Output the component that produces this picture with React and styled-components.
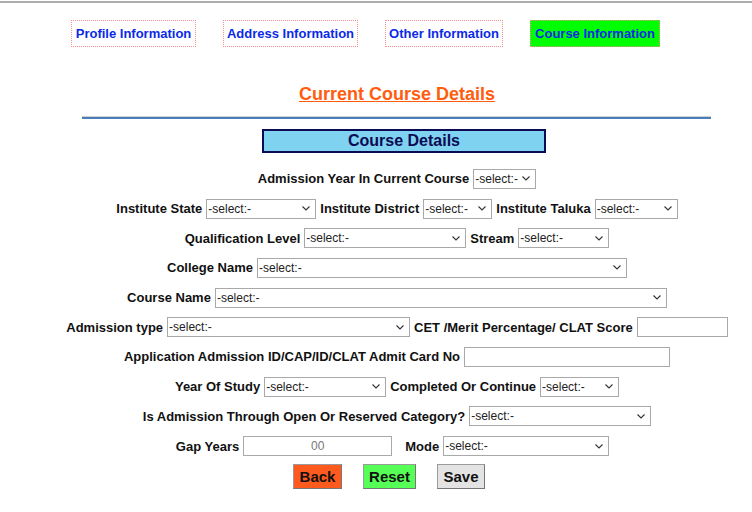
import React from "react";
import styled, { createGlobalStyle } from "styled-components";

const GlobalStyle = createGlobalStyle`
  body {
    margin: 0;
    background: #ffffff;
    font-family: "Liberation Sans", Arial, sans-serif;
  }
`;

// small chevron drawn for the dropdowns
const chevron =
  "data:image/svg+xml;utf8," +
  encodeURIComponent(
    '<svg xmlns="http://www.w3.org/2000/svg" width="8" height="5" viewBox="0 0 8 5"><path d="M0.5 0.5 L4 4 L7.5 0.5" fill="none" stroke="#333" stroke-width="1.1"/></svg>'
  );

const Page = styled.div`
  width: 752px;
  height: 512px;
  box-sizing: border-box;
  margin-top: 1px;
  border-top: 2px solid #adadad;
`;

const Tabs = styled.div`
  display: flex;
  gap: 27px;
  padding: 17px 0 0 71px;
`;

const Tab = styled.div`
  box-sizing: border-box;
  height: 27px;
  width: ${(p) => p.w}px;
  display: flex;
  align-items: center;
  justify-content: center;
  border: 1px dotted #f39090;
  background: ${(p) => (p.active ? "#00ff00" : "#ffffff")};
  color: #0a2ae8;
  font-size: 13px;
  font-weight: bold;
`;

const Body = styled.div`
  padding-left: 42px;
`;

const Title = styled.h2`
  margin: 36px 0 0;
  text-align: center;
  font-size: 18px;
  line-height: 22px;
  font-weight: bold;
  color: #ff5c0e;
  text-decoration: underline;
`;

const Rule = styled.div`
  margin: 11px 41px 0 40px;
  height: 2px;
  background: #4a7ebb;
  border-top: 1px solid #cfcfcf;
`;

const SectionHead = styled.div`
  box-sizing: border-box;
  width: 284px;
  height: 24px;
  margin: 10px 0 0 220px;
  display: flex;
  align-items: center;
  justify-content: center;
  background: #7fd3f0;
  border: 2px solid #0b0b55;
  color: #0b0b55;
  font-size: 16px;
  font-weight: bold;
`;

const Form = styled.div`
  display: flex;
  flex-direction: column;
  margin-top: 11px;
`;

const Row = styled.div`
  height: 29.7px;
  display: flex;
  align-items: center;
  justify-content: center;
  gap: 4px;
  margin-left: ${(p) => p.shift || 0}px;
`;

const Label = styled.span`
  font-size: 13px;
  font-weight: bold;
  color: #111111;
  white-space: nowrap;
  margin-left: ${(p) => p.gap || 0}px;
`;

const Select = styled.select`
  box-sizing: border-box;
  width: ${(p) => p.w}px;
  height: 20px;
  padding: 0 14px 0 1px;
  border: 1px solid #a9a9a9;
  border-radius: 0;
  appearance: none;
  background: #ffffff url("${chevron}") no-repeat right 5px center;
  color: #222222;
  font-family: "Liberation Sans", Arial, sans-serif;
  font-size: 12px;
`;

const TextInput = styled.input`
  box-sizing: border-box;
  width: ${(p) => p.w}px;
  height: 20px;
  padding: 0 2px;
  border: 1px solid #a9a9a9;
  border-radius: 0;
  color: #777777;
  text-align: ${(p) => (p.center ? "center" : "left")};
  font-family: "Liberation Sans", Arial, sans-serif;
  font-size: 12px;
`;

const Buttons = styled.div`
  display: flex;
  justify-content: center;
  gap: 21px;
  margin-top: 3px;
  transform: translateX(-8px);
`;

const Button = styled.button`
  box-sizing: border-box;
  height: 25px;
  width: ${(p) => p.w}px;
  padding: 0;
  border: 1px solid #9a9a9a;
  border-right-color: #777777;
  border-bottom-color: #777777;
  background: ${(p) => p.bg};
  color: #111111;
  font-family: "Liberation Sans", Arial, sans-serif;
  font-size: 15px;
  font-weight: bold;
`;

const Sel = ({ w }) => (
  <Select w={w} defaultValue="">
    <option value="">-select:-</option>
  </Select>
);

export default function App() {
  return (
    <>
      <GlobalStyle />
      <Page>
        <Tabs>
          <Tab w={125}>Profile Information</Tab>
          <Tab w={135}>Address Information</Tab>
          <Tab w={118}>Other Information</Tab>
          <Tab w={130} active>
            Course Information
          </Tab>
        </Tabs>
        <Body>
          <Title>Current Course Details</Title>
          <Rule />
          <SectionHead>Course Details</SectionHead>
          <Form>
            <Row>
              <Label>Admission Year In Current Course</Label>
              <Sel w={63} />
            </Row>
            <Row>
              <Label>Institute State</Label>
              <Sel w={110} />
              <Label>Institute District</Label>
              <Sel w={69} />
              <Label>Institute Taluka</Label>
              <Sel w={83} />
            </Row>
            <Row>
              <Label>Qualification Level</Label>
              <Sel w={162} />
              <Label>Stream</Label>
              <Sel w={91} />
            </Row>
            <Row>
              <Label>College Name</Label>
              <Sel w={370} />
            </Row>
            <Row>
              <Label>Course Name</Label>
              <Sel w={452} />
            </Row>
            <Row>
              <Label>Admission type</Label>
              <Sel w={243} />
              <Label>CET /Merit Percentage/ CLAT Score</Label>
              <TextInput w={91} />
            </Row>
            <Row>
              <Label>Application Admission ID/CAP/ID/CLAT Admit Card No</Label>
              <TextInput w={206} />
            </Row>
            <Row>
              <Label>Year Of Study</Label>
              <Sel w={122} />
              <Label>Completed Or Continue</Label>
              <Sel w={79} />
            </Row>
            <Row>
              <Label>Is Admission Through Open Or Reserved Category?</Label>
              <Sel w={182} />
            </Row>
            <Row shift={-9}>
              <Label>Gap Years</Label>
              <TextInput w={149} center defaultValue="00" />
              <Label gap={9}>Mode</Label>
              <Sel w={166} />
            </Row>
          </Form>
          <Buttons>
            <Button w={49} bg="#ff5a1e">Back</Button>
            <Button w={53} bg="#55ff55">Reset</Button>
            <Button w={48} bg="#e3e3e3">Save</Button>
          </Buttons>
        </Body>
      </Page>
    </>
  );
}
